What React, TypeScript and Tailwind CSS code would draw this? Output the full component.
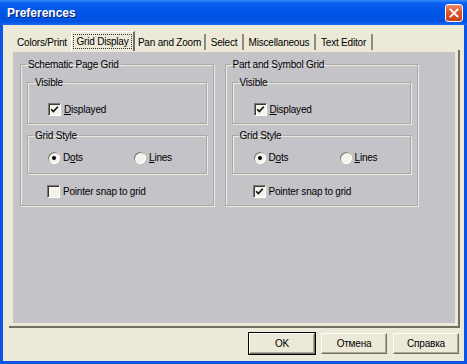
import type { ReactNode } from 'react';

const font = { fontFamily: '"Liberation Sans", Arial, sans-serif' };

const tabs = [
  { label: 'Colors/Print', w: 'w-[58px]' },
  { label: 'Grid Display', w: 'w-[64px]', active: true },
  { label: 'Pan and Zoom', w: 'w-[71px]' },
  { label: 'Select', w: 'w-[38px]' },
  { label: 'Miscellaneous', w: 'w-[72px]' },
  { label: 'Text Editor', w: 'w-[57px]' },
];

function Check({ checked }: { checked?: boolean }) {
  return (
    <span className="w-[13px] h-[13px] shrink-0 flex items-center justify-center bg-[#f3f2ec] border border-t-[#7b7a72] border-l-[#7b7a72] border-b-[#ffffff] border-r-[#ffffff] shadow-[inset_1px_1px_0_#3c3b36]">
      {checked && (
        <svg width="9" height="9" viewBox="0 0 9 9" aria-hidden>
          <path d="M1.2 4.2 L3.4 6.6 L7.8 1.8" fill="none" stroke="#111" strokeWidth={1.7} />
        </svg>
      )}
    </span>
  );
}

function Radio({ on }: { on?: boolean }) {
  return (
    <span className="w-[12px] h-[12px] shrink-0 rounded-full flex items-center justify-center bg-[#f3f2ec] shadow-[inset_1px_1px_0_#7b7a72,inset_-1px_-1px_0_#ffffff]">
      {on && <span className="w-[4px] h-[4px] rounded-full bg-black" />}
    </span>
  );
}

// etched frame: dark line, light line one pixel further in/right
function Group({ title, className, children }: { title: string; className?: string; children: ReactNode }) {
  return (
    <fieldset className={`border border-[#a9a8a2] shadow-[1px_1px_0_#ebe9e0,inset_1px_1px_0_#ebe9e0] ${className ?? ''}`}>
      <legend className="ml-[5px] px-[2px] leading-[13px]">{title}</legend>
      {children}
    </fieldset>
  );
}

function Column({ title, snap, offset }: { title: string; snap?: boolean; offset: string }) {
  return (
    <Group title={title} className="flex-1">
      <div className="px-[6px] pt-[5px] pb-[7px]">
        <Group title="Visible">
          <div className={`flex items-center gap-[3px] ${offset} pt-[14px] pb-[7px] leading-[13px]`}>
            <Check checked />
            <span>
              <span className="underline">D</span>isplayed
            </span>
          </div>
        </Group>
        <Group title="Grid Style" className="mt-[5px]">
          <div className={`flex items-center ${offset} pt-[9px] pb-[9px] leading-[13px]`}>
            <div className="w-[86px] flex items-center gap-[3px]">
              <Radio on />
              <span>
                D<span className="underline">o</span>ts
              </span>
            </div>
            <div className="flex items-center gap-[3px]">
              <Radio />
              <span>
                <span className="underline">L</span>ines
              </span>
            </div>
          </div>
        </Group>
        <div className={`flex items-center gap-[3px] ${offset} mt-[11px] leading-[13px]`}>
          <Check checked={snap} />
          <span>Pointer snap to grid</span>
        </div>
      </div>
    </Group>
  );
}

function Btn({ children, def }: { children: ReactNode; def?: boolean }) {
  return (
    <button
      className={`w-[66px] h-[21px] flex items-center justify-center bg-[#ece9d8] border border-t-white border-l-white border-b-[#716f64] border-r-[#716f64] shadow-[inset_-1px_-1px_0_#aca899] ${
        def ? 'outline outline-1 outline-black' : ''
      }`}
    >
      {children}
    </button>
  );
}

export default function App() {
  return (
    <div className="w-[467px] h-[364px] flex flex-col bg-[#0a55e6] text-[10px] tracking-[-0.2px] text-black" style={font}>
      {/* Title bar */}
      <div className="h-[25px] shrink-0 flex items-center justify-between pl-[7px] pr-[4px] bg-[linear-gradient(to_bottom,#3a8cff_0%,#0a5ff0_12%,#0055e8_50%,#0052e2_85%,#1c68f2_100%)]">
        <span className="text-white font-bold text-[12px] tracking-normal [text-shadow:1px_1px_0_#0a1e6a]">Preferences</span>
        <div className="w-[18px] h-[18px] rounded-[3px] border border-white bg-[linear-gradient(to_bottom,#ef8a68,#e0552d_45%,#c8421c)] flex items-center justify-center">
          <svg width="10" height="10" viewBox="0 0 10 10" aria-hidden>
            <path d="M1.5 1.5 L8.5 8.5 M8.5 1.5 L1.5 8.5" stroke="#fff" strokeWidth={1.8} strokeLinecap="square" />
          </svg>
        </div>
      </div>

      {/* Body */}
      <div className="flex-1 mx-[3px] mb-[3px] bg-[#ece9d8] flex flex-col">
        {/* Tabs */}
        <div className="flex items-end h-[25px] pl-[10px]">
          {tabs.map((t) =>
            t.active ? (
              <div
                key={t.label}
                className={`${t.w} h-[20px] -mb-px flex items-center justify-center border-t border-l border-white border-r-2 border-r-[#716f64]`}
              >
                <span className="px-[2px] leading-[13px] outline outline-1 outline-dotted outline-[#333]">{t.label}</span>
              </div>
            ) : (
              <div
                key={t.label}
                className={`${t.w} h-[16px] flex items-center justify-center ${t.label === 'Colors/Print' ? '' : 'border-r-2 border-r-[#8d8b80]'}`}
              >
                <span className="leading-[13px]">{t.label}</span>
              </div>
            )
          )}
        </div>

        {/* Tab panel */}
        <div className="ml-[6px] mr-[4px] h-[278px] border-r-2 border-b-2 border-[#716f64] pl-[4px] pt-[2px] pr-[3px] pb-[3px]">
          <div className="h-full bg-[#c4c3c8] flex gap-[11px] pl-[7px] pr-[37px] pt-[6px] items-start">
            <Column title="Schematic Page Grid" offset="pl-[20px]" />
            <Column title="Part and Symbol Grid" offset="pl-[21px]" snap />
          </div>
        </div>

        {/* Buttons */}
        <div className="flex justify-end gap-[6px] mt-[5px] pr-[5px]">
          <Btn def>OK</Btn>
          <Btn>Отмена</Btn>
          <Btn>Справка</Btn>
        </div>
      </div>
    </div>
  );
}
